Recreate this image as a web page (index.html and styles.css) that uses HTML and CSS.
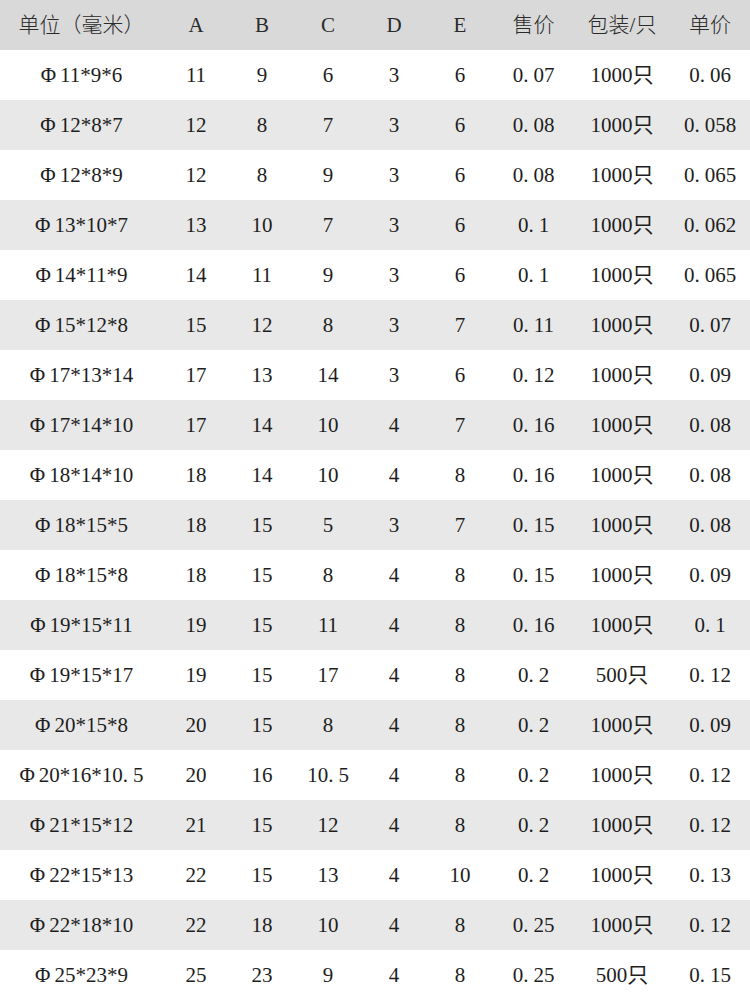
FILE: index.html
```html
<!DOCTYPE html>
<html lang="zh">
<head>
<meta charset="utf-8">
<link rel="stylesheet" href="styles.css">
</head>
<body>
<table class="spec">
<colgroup>
<col class="c-size"><col class="c-n"><col class="c-n"><col class="c-n"><col class="c-n"><col class="c-n"><col class="c-price"><col class="c-pack"><col class="c-unit">
</colgroup>
<thead>
<tr><th>单位（毫米）</th><th>A</th><th>B</th><th>C</th><th>D</th><th>E</th><th>售价</th><th>包装/只</th><th>单价</th></tr>
</thead>
<tbody>
<tr><td><span class="phi">Φ</span>11*9*6</td><td>11</td><td>9</td><td>6</td><td>3</td><td>6</td><td>0<span class="dot">.</span>07</td><td>1000只</td><td>0<span class="dot">.</span>06</td></tr>
<tr><td><span class="phi">Φ</span>12*8*7</td><td>12</td><td>8</td><td>7</td><td>3</td><td>6</td><td>0<span class="dot">.</span>08</td><td>1000只</td><td>0<span class="dot">.</span>058</td></tr>
<tr><td><span class="phi">Φ</span>12*8*9</td><td>12</td><td>8</td><td>9</td><td>3</td><td>6</td><td>0<span class="dot">.</span>08</td><td>1000只</td><td>0<span class="dot">.</span>065</td></tr>
<tr><td><span class="phi">Φ</span>13*10*7</td><td>13</td><td>10</td><td>7</td><td>3</td><td>6</td><td>0<span class="dot">.</span>1</td><td>1000只</td><td>0<span class="dot">.</span>062</td></tr>
<tr><td><span class="phi">Φ</span>14*11*9</td><td>14</td><td>11</td><td>9</td><td>3</td><td>6</td><td>0<span class="dot">.</span>1</td><td>1000只</td><td>0<span class="dot">.</span>065</td></tr>
<tr><td><span class="phi">Φ</span>15*12*8</td><td>15</td><td>12</td><td>8</td><td>3</td><td>7</td><td>0<span class="dot">.</span>11</td><td>1000只</td><td>0<span class="dot">.</span>07</td></tr>
<tr><td><span class="phi">Φ</span>17*13*14</td><td>17</td><td>13</td><td>14</td><td>3</td><td>6</td><td>0<span class="dot">.</span>12</td><td>1000只</td><td>0<span class="dot">.</span>09</td></tr>
<tr><td><span class="phi">Φ</span>17*14*10</td><td>17</td><td>14</td><td>10</td><td>4</td><td>7</td><td>0<span class="dot">.</span>16</td><td>1000只</td><td>0<span class="dot">.</span>08</td></tr>
<tr><td><span class="phi">Φ</span>18*14*10</td><td>18</td><td>14</td><td>10</td><td>4</td><td>8</td><td>0<span class="dot">.</span>16</td><td>1000只</td><td>0<span class="dot">.</span>08</td></tr>
<tr><td><span class="phi">Φ</span>18*15*5</td><td>18</td><td>15</td><td>5</td><td>3</td><td>7</td><td>0<span class="dot">.</span>15</td><td>1000只</td><td>0<span class="dot">.</span>08</td></tr>
<tr><td><span class="phi">Φ</span>18*15*8</td><td>18</td><td>15</td><td>8</td><td>4</td><td>8</td><td>0<span class="dot">.</span>15</td><td>1000只</td><td>0<span class="dot">.</span>09</td></tr>
<tr><td><span class="phi">Φ</span>19*15*11</td><td>19</td><td>15</td><td>11</td><td>4</td><td>8</td><td>0<span class="dot">.</span>16</td><td>1000只</td><td>0<span class="dot">.</span>1</td></tr>
<tr><td><span class="phi">Φ</span>19*15*17</td><td>19</td><td>15</td><td>17</td><td>4</td><td>8</td><td>0<span class="dot">.</span>2</td><td>500只</td><td>0<span class="dot">.</span>12</td></tr>
<tr><td><span class="phi">Φ</span>20*15*8</td><td>20</td><td>15</td><td>8</td><td>4</td><td>8</td><td>0<span class="dot">.</span>2</td><td>1000只</td><td>0<span class="dot">.</span>09</td></tr>
<tr><td><span class="phi">Φ</span>20*16*10<span class="dot">.</span>5</td><td>20</td><td>16</td><td>10<span class="dot">.</span>5</td><td>4</td><td>8</td><td>0<span class="dot">.</span>2</td><td>1000只</td><td>0<span class="dot">.</span>12</td></tr>
<tr><td><span class="phi">Φ</span>21*15*12</td><td>21</td><td>15</td><td>12</td><td>4</td><td>8</td><td>0<span class="dot">.</span>2</td><td>1000只</td><td>0<span class="dot">.</span>12</td></tr>
<tr><td><span class="phi">Φ</span>22*15*13</td><td>22</td><td>15</td><td>13</td><td>4</td><td>10</td><td>0<span class="dot">.</span>2</td><td>1000只</td><td>0<span class="dot">.</span>13</td></tr>
<tr><td><span class="phi">Φ</span>22*18*10</td><td>22</td><td>18</td><td>10</td><td>4</td><td>8</td><td>0<span class="dot">.</span>25</td><td>1000只</td><td>0<span class="dot">.</span>12</td></tr>
<tr><td><span class="phi">Φ</span>25*23*9</td><td>25</td><td>23</td><td>9</td><td>4</td><td>8</td><td>0<span class="dot">.</span>25</td><td>500只</td><td>0<span class="dot">.</span>15</td></tr>
</tbody>
</table>
</body>
</html>
```

FILE: styles.css
```css
html, body {
  margin: 0;
  padding: 0;
  background: #ffffff;
}

.spec {
  width: 750px;
  table-layout: fixed;
  border-collapse: collapse;
  font-family: "Liberation Serif", "Noto Sans CJK SC", serif;
  font-size: 21px;
  line-height: 24px;
  color: #1e1e1e;
}

.c-size { width: 163px; }
.c-n { width: 66px; }
.c-price { width: 81px; }
.c-pack { width: 96px; }
.c-unit { width: 80px; }

.spec th,
.spec td {
  height: 50px;
  padding: 0;
  text-align: center;
  vertical-align: middle;
  white-space: nowrap;
  font-weight: normal;
}

.spec thead tr {
  background: #d9d9d9;
}

.spec th {
  color: #2a2a2a;
  font-weight: 300;
}

.spec tbody tr:nth-child(even) {
  background: #e8e8e8;
}

.dot {
  margin-right: 5px;
}

.phi {
  margin-right: 4px;
}
```
